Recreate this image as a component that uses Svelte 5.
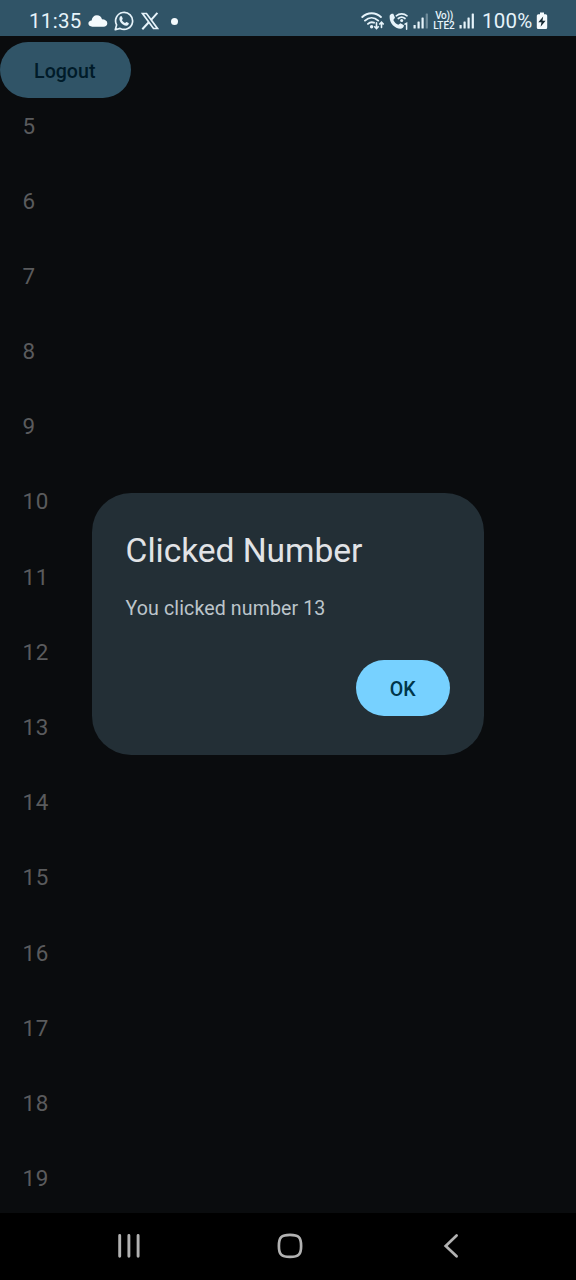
<script>
  const numbers = Array.from({ length: 15 }, (_, i) => i + 5);
</script>

{#snippet bars(dim)}
  <svg class="signal" width="16" height="16" viewBox="0 0 16 16" fill="#e6f3fa">
    <rect x="0.5" y="12" width="2.200" height="3.5" rx=".6" />
    <rect x="4.5" y="8.5" width="2.200" height="7" rx=".6" />
    <rect x="8.5" y="4.5" width="2.200" height="11" rx=".6" />
    <rect x="12.7" y="0.5" width="2.200" height="15" rx=".6" opacity={dim ? 0.35 : 1} />
  </svg>
{/snippet}

<div class="screen">
  <header class="status">
    <span class="time">11:35</span>
    <svg class="cloud" width="20" height="14" viewBox="0 0 20 14" fill="#f4fafd">
      <path d="M4.300 12.700C2 12.700.4 11.400.4 9.600c0-1.700 1.300-2.900 3.200-3C4.100 3.300 6 1.300 8.900 1.300c2.600 0 4.400 1.500 5.100 4 3.100.1 5.300 1.600 5.300 3.900 0 2-1.500 3.500-3.800 3.500z" />
    </svg>
    <svg class="whatsapp" width="20" height="20" viewBox="0 0 20 20" fill="none" stroke="#e6f3fa">
      <path d="M1.300 18.700l1.300-4.800A8.500 8.500 0 1 1 6.100 17.400z" stroke-width="1.700" stroke-linejoin="round" />
      <path d="M6.200 5.600c.6-.7 1.400-.7 1.700 0l.8 1.800c.2.600-.7 1.200-.8 1.600.6 1.400 1.700 2.400 3.200 3.100.5-.2 1-1.200 1.500-1l2 1c.5.400.1 1.500-.7 2.100-1.100.8-3 .5-5-.8-1.700-1.200-3.300-3.200-3.500-5 0-1 .2-2.200.8-2.800z" fill="#e6f3fa" stroke="none" />
    </svg>
    <svg class="xlogo" width="18" height="18" viewBox="0 0 18 18" fill="none" stroke="#e6f3fa">
      <path d="M1.500 1.500h4L16.500 16.500h-4z" stroke-width="1.700" />
      <path d="M16.400.8l-6.500 7.300M7.800 10.200L1.300 17.300" stroke-width="2" />
    </svg>
    <i class="dot"></i>
    <svg class="wifi" width="24" height="20" viewBox="0 0 24 20" fill="none" stroke="#e6f3fa" stroke-width="1.900" stroke-linecap="round">
      <path d="M1.300 6C6.500.9 14.700.9 19.900 6M4 9.600c4-3.700 9.200-3.700 13.200 0M7 12.900c1.800-1.700 4-2 6-1.200" />
      <circle cx="10.600" cy="15.800" r="1.700" fill="#e6f3fa" stroke="none" />
      <path d="M15.500 11.800v5.700M13.700 15.800l1.800 1.900 1.800-1.900M20.500 16.500v-5.200M18.700 13l1.800-1.900 1.800 1.900" stroke-width="1.600" />
    </svg>
    <svg class="call" width="20" height="20" viewBox="0 0 20 20" fill="none" stroke="#e6f3fa" stroke-linecap="round">
      <path d="M.8 4.300C1.500 3 3 2.300 4.300 2.800l1.700 4-1.700 2.200c1 2.200 2.800 3.900 5 4.800l2.200-1.600 3.400 2c.2 1.900-1.500 3.500-3.400 3.500C5 17.500-.4 10.800.8 4.300z" fill="#e6f3fa" stroke="none" />
      <path d="M7.300 4.800c3-2.500 7.700-2.500 10.700 0M9.300 7.500c2-1.600 4.700-1.600 6.700 0" stroke-width="1.700" />
      <circle cx="12.700" cy="9.600" r="1.500" fill="#e6f3fa" stroke="none" />
      <path d="M16 13.200l1.600-.9v6" stroke-width="1.500" />
    </svg>
    {@render bars(true)}
    <span class="volte"><b>Vo))</b><b>LTE2</b></span>
    {@render bars(false)}
    <span class="percent">100%</span>
    <svg class="battery" width="12" height="18" viewBox="0 0 12 18">
      <path d="M4 .5h4v1.800h1.700q1.500 0 1.500 1.500v11.700q0 1.500-1.500 1.500H2.300q-1.500 0-1.500-1.500V3.800q0-1.500 1.500-1.500H4z" fill="#f4fafd" />
      <path d="M7.200 4.500L2.300 10.200h3.200L4.600 14.700l5-6H6.500z" fill="#172b35" />
    </svg>
  </header>

  <main>
    <button class="logout">Logout</button>
    <ul>
      {#each numbers as n}
        <li>{n}</li>
      {/each}
    </ul>
  </main>

  <nav>
    <svg width="24" height="26" viewBox="0 0 24 26" stroke="#b2b2b2" stroke-width="2.900" stroke-linecap="round">
      <path d="M2.700 2.500v20.800M11.900 2.500v20.800M21.100 2.500v20.800" />
    </svg>
    <svg class="home" width="26" height="26" viewBox="0 0 26 26" fill="none" stroke="#b2b2b2" stroke-width="2.700">
      <path d="M13 1.900c8.700 0 11.100 2.300 11.100 11s-2.400 11-11.100 11-11.100-2.300-11.100-11S4.300 1.900 13 1.900z" />
    </svg>
    <svg width="16" height="26" viewBox="0 0 16 26" fill="none" stroke="#b2b2b2" stroke-width="2.700" stroke-linecap="round">
      <path d="M13.600 2.500L2.700 12.900l10.900 10.400" />
    </svg>
  </nav>

  <div class="dialog" role="dialog">
    <h1>Clicked Number</h1>
    <p>You clicked number 13</p>
    <button class="ok">OK</button>
  </div>
</div>

<style>
  :global(body) { margin: 0; background: #000; }
  .screen {
    position: relative;
    width: 576px;
    height: 1280px;
    overflow: hidden;
    display: flex;
    flex-direction: column;
    background: #0a0c0e;
    font-family: Roboto, sans-serif;
  }
  .status {
    box-sizing: border-box;
    height: 36px;
    flex: none;
    display: flex;
    align-items: center;
    padding: 6px 28px 0 29px;
    background: #305467;
    color: #e6f3fa;
  }
  .status svg, .status span, .dot { flex: none; }
  .time { width: 53px; font-size: 20.500px; line-height: 28px; letter-spacing: .3px; }
  .cloud { margin-left: 6px; }
  .whatsapp { margin-left: 6px; }
  .xlogo { margin-left: 7px; }
  .dot { width: 7px; height: 7px; margin-left: 12px; border-radius: 50%; background: #f4fafd; }
  .wifi { margin-left: auto; }
  .call { margin-left: 4px; }
  .signal { margin-left: 4px; }
  .volte { width: 22px; margin: 0 0 0 4px; display: flex; flex-direction: column; align-items: center; }
  .volte b { font-size: 10px; line-height: 10px; font-weight: 500; }
  .volte b:first-child { letter-spacing: -.3px; }
  .percent { width: 50px; margin-left: 7px; font-size: 20.500px; line-height: 28px; letter-spacing: .2px; }
  .battery { margin-left: 4px; }
  main { flex: 1; min-height: 0; overflow: hidden; padding-top: 5.500px; }
  button {
    display: block;
    border: 0;
    padding: 0;
    height: 56px;
    border-radius: 28px;
    font: 500 19.600px/56px Roboto, sans-serif;
    letter-spacing: 0;
  }
  .logout { width: 130.500px; padding-right: 1px; line-height: 59px; background: #305467; color: #001b29; }
  ul {
    list-style: none;
    margin: 0;
    padding: 12px 22.500px 0;
    display: flex;
    flex-direction: column;
    gap: 41.600px;
  }
  li {
    height: 33.600px;
    flex: none;
    font-size: 22.400px;
    line-height: 33.600px;
    letter-spacing: .7px;
    color: #5a5b5d;
  }
  nav {
    box-sizing: border-box;
    height: 67px;
    flex: none;
    display: flex;
    align-items: center;
    justify-content: space-between;
    padding: 0 117px 1px;
    background: #000;
  }
  .home { margin-right: 5px; }
  .dialog {
    position: absolute;
    left: 92px;
    top: 492.500px;
    box-sizing: border-box;
    width: 392px;
    height: 262.500px;
    padding: 33.600px;
    border-radius: 39px;
    background: #232f36;
    display: flex;
    flex-direction: column;
  }
  h1 { margin: 3px 0 0; font-size: 33.600px; line-height: 44.800px; font-weight: 400; letter-spacing: -.05px; color: #e1e3e6; }
  p { margin: 21px 0 0; font-size: 19.600px; line-height: 28px; letter-spacing: .1px; color: #bcc5cb; }
  .ok { width: 94.500px; padding-right: 1px; margin: 37px 0 0 auto; line-height: 59px; background: #77d1ff; color: #003549; }
</style>
